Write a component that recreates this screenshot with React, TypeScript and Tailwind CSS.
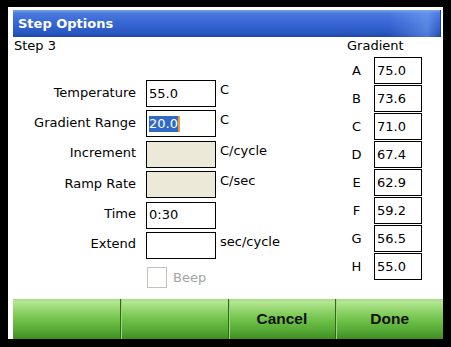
const font = { fontFamily: '"DejaVu Sans", Verdana, sans-serif' };

const rows = [
  { label: "Temperature", value: "55.0", unit: "C" },
  { label: "Gradient Range", value: "20.0", unit: "C", selected: true },
  { label: "Increment", value: "", unit: "C/cycle", disabled: true },
  { label: "Ramp Rate", value: "", unit: "C/sec", disabled: true },
  { label: "Time", value: "0:30", unit: "" },
  { label: "Extend", value: "", unit: "sec/cycle" },
];

const gradient = [
  ["A", "75.0"],
  ["B", "73.6"],
  ["C", "71.0"],
  ["D", "67.4"],
  ["E", "62.9"],
  ["F", "59.2"],
  ["G", "56.5"],
  ["H", "55.0"],
];

const buttons = ["", "", "Cancel", "Done"];

const App = () => {
  return (
    <div className="w-[451px] h-[347px] bg-black pt-[7px] pl-[8px] pr-[8px] pb-[8px]">
      <div className="bg-white h-full flex flex-col text-[13px] text-black" style={font}>
        <div className="mt-[3px] ml-[5px] mr-[2px] h-[27px] flex items-center pl-[5px] bg-[linear-gradient(to_right,transparent_88%,rgba(130,175,255,0.45)_97%,transparent_100%),linear-gradient(to_bottom,#7aa2ea_0%,#4a7ade_12%,#3566d2_50%,#2a57c0_85%,#1f47a6_100%)] border-r border-[#1c3f95]">
          <span className="text-white font-bold text-[13px] leading-none">Step Options</span>
        </div>

        <div className="flex-1 flex pl-[6px]">
          <div className="w-[333px] flex flex-col">
            <div className="pt-[1px] leading-[16px]">Step 3</div>
            <div className="mt-[26px] grid grid-cols-[122px_70px_auto] gap-x-[10px] gap-y-[3.4px] items-center">
              {rows.map((r) => (
                <>
                  <div key={r.label + "l"} className="text-right leading-[16px] -mt-[2px]">{r.label}</div>
                  <div
                    key={r.label + "b"}
                    className={`h-[27px] border border-black flex items-center pl-[2px] leading-[16px] ${r.disabled ? "bg-[#ece9d8]" : "bg-white"}`}
                  >
                    {r.selected ? (
                      <span className="bg-[#316ac5] text-white border-r-2 border-[#e49b3c]">{r.value}</span>
                    ) : (
                      r.value
                    )}
                  </div>
                  <div key={r.label + "u"} className="-ml-[6px] leading-[16px] self-start mt-[2px]">{r.unit}</div>
                </>
              ))}
              <div></div>
              <div className="col-span-2 flex items-center mt-[5px]">
                <div className="w-[20px] h-[21px] ml-[1px] border border-[#c4c2b8] bg-white"></div>
                <span className="ml-[6px] text-[#a3a3a3] leading-[16px]">Beep</span>
              </div>
            </div>
          </div>

          <div className="flex flex-col">
            <div className="pt-[1px] leading-[16px]">Gradient</div>
            <div className="mt-[3px] flex flex-col gap-[1px]">
              {gradient.map(([l, v]) => (
                <div key={l} className="flex items-center">
                  <div className="w-[19px] text-center leading-[16px]">{l}</div>
                  <div className="ml-[8px] w-[48px] h-[27px] border border-black flex items-center pl-[2px] leading-[16px]">
                    {v}
                  </div>
                </div>
              ))}
            </div>
          </div>
        </div>

        <div className="ml-[5px] h-[40px] flex">
          {buttons.map((b, i) => (
            <div
              key={i}
              className={`flex-1 flex items-center justify-center bg-[linear-gradient(to_bottom,#a8dc86_0%,#b4e692_8%,#8fd36a_30%,#6cc046_55%,#54a835_80%,#3f8c24_100%)] ${i > 0 ? "border-l border-[#2f6a1c] shadow-[inset_1px_0_0_#9fd67c]" : ""}`}
            >
              <span
                className="font-bold text-[15.5px] text-[#111]"
                style={{ fontFamily: '"Liberation Sans", Arial, sans-serif' }}
              >
                {b}
              </span>
            </div>
          ))}
        </div>
      </div>
    </div>
  );
};

export default App;
